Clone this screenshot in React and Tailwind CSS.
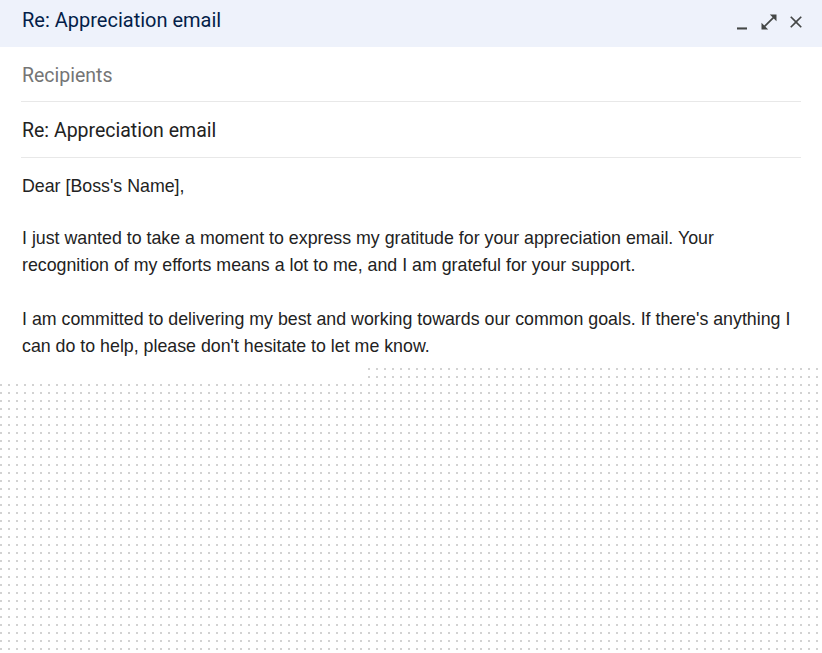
import React from "react";

function Icon({ d, className }) {
  return (
    <svg viewBox="0 0 24 24" className={className} fill="currentColor">
      <path d={d} />
    </svg>
  );
}

export default function App() {
  return (
    <div className="w-[822px] h-[653px] bg-white bg-[radial-gradient(circle_at_1px_1px,#d2d2d2_1px,transparent_0)] bg-[length:8px_8px] overflow-hidden">
      <div className="bg-white">
        <div className="h-[47px] bg-[#eef2fb] flex items-center justify-between pl-[22px] pr-[16px] pb-[7px]">
          <div className="text-[20px] text-[#041e49] font-['Roboto',sans-serif]">Re: Appreciation email</div>
          <div className="flex items-center gap-[7px] text-[#444746] pt-[3px]">
            <Icon className="w-[20px] h-[20px]" d="M6 18.5h12v2.5H6z" />
            <Icon className="w-[20px] h-[20px]" d="M21 11V3h-8l3.29 3.29-10 10L3 13v8h8l-3.29-3.29 10-10z" />
            <Icon className="w-[20px] h-[20px]" d="M19 6.41L17.59 5 12 10.59 6.41 5 5 6.41 10.59 12 5 17.59 6.41 19 12 13.41 17.59 19 19 17.59 13.41 12z" />
          </div>
        </div>
        <div className="px-[21px]">
          <div className="h-[55px] flex items-center border-b border-[#e8e8e8] pl-px pt-[3px] text-[19.5px] text-[#757575] font-['Roboto',sans-serif]">Recipients</div>
          <div className="h-[56px] flex items-center border-b border-[#e8e8e8] pl-px pt-[2px] text-[19.5px] text-[#222222] font-['Roboto',sans-serif]">Re: Appreciation email</div>
          <div className="pl-px pt-[15px] pb-[7px] text-[17.8px] leading-[27px] text-[#222222] font-['Liberation_Sans',Arial,sans-serif]">
            <p>Dear [Boss's Name],</p>
            <p className="mt-[25px]">I just wanted to take a moment to express my gratitude for your appreciation email. Your recognition of my efforts means a lot to me, and I am grateful for your support.</p>
            <p className="mt-[27px]">I am committed to delivering my best and working towards our common goals. If there's anything I can do to help, please don't hesitate to let me know.</p>
          </div>
        </div>
      </div>
      <div className="w-[368px] h-[16px] bg-white" />
    </div>
  );
}
